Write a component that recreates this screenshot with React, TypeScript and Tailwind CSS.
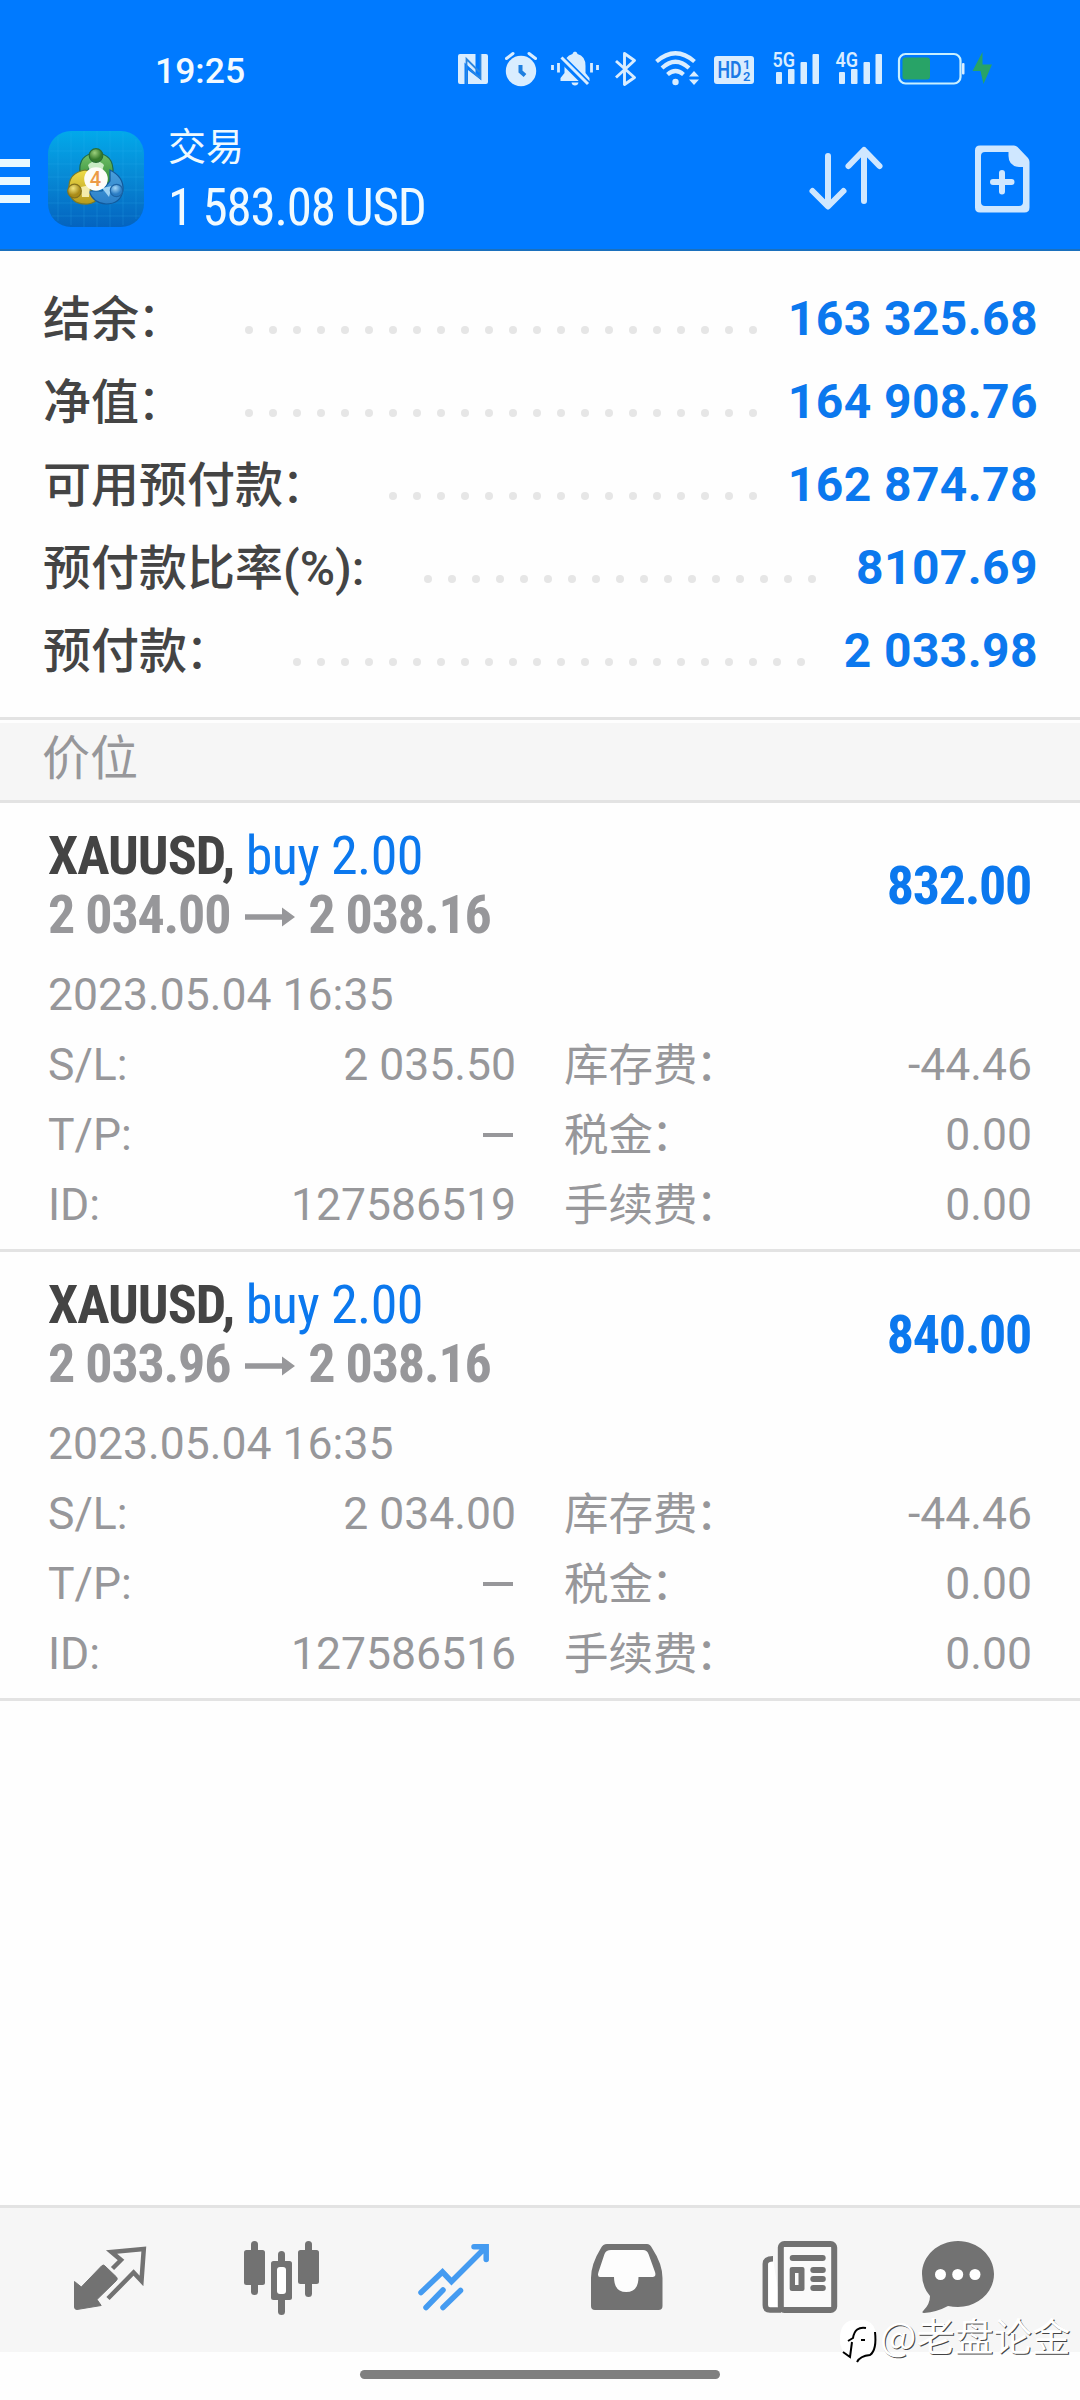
import React from "react";

const ICE = "#d9edff";

function StatusBar() {
  return (
    <div className="flex h-[100px] items-start pt-[50px]">
      <div className="ml-[155px] w-[303px] pt-[2px] font-['Roboto'] text-[35.500px] leading-[38px] font-medium text-[#f3faff]">19:25</div>
      {/* NFC */}
      <svg className="h-[38px] w-[30px]" viewBox="458 50 30 38">
        <path fill={ICE} d="M460 54H475.5V73L464.5 62.5V84H460Q458 84 458 82V56Q458 54 460 54Z" />
        <path fill={ICE} d="M481 54H486Q488 54 488 56V82Q488 84 486 84H468V70L481 80Z" />
        <path fill="none" stroke="#2a86e0" strokeWidth="1.8" d="M466.5 84V59L479.5 72M480.5 54V78.500L470 69" />
      </svg>
      {/* Alarm */}
      <svg className="ml-[16px] h-[38px] w-[34px]" viewBox="504 50 34 38">
        <circle cx="521" cy="71" r="15.200" fill={ICE} />
        <path d="M506.500 58.500L513 53.500M535.500 58.500L529 53.500" stroke={ICE} strokeWidth="3" strokeLinecap="round" />
        <path d="M520.500 65V71.500L525 75.500" stroke="#1f7fe0" strokeWidth="4" fill="none" />
      </svg>
      {/* Muted bell */}
      <svg className="ml-[12px] h-[38px] w-[50px]" viewBox="550 50 50 38">
        <path fill={ICE} d="M575 51.500Q577.500 52 577.500 54Q585.500 56 585.500 66V73L589.500 78V81H560.500V78L564.500 73V66Q564.500 56 572.500 54Q572.500 52 575 51.500ZM571.500 82.500H578.500Q578 85.500 575 85.500Q572 85.500 571.500 82.500Z" />
        <path d="M560 57L588 85" stroke="#007aff" strokeWidth="7.500" />
        <path d="M561.500 57.500L588 84" stroke={ICE} strokeWidth="3" />
        <path d="M552.500 65V70M558.500 63V72.500M591.500 63V72.500M597.500 65V70" stroke={ICE} strokeWidth="2.800" />
      </svg>
      {/* Bluetooth */}
      <svg className="ml-[14px] h-[38px] w-[24px]" viewBox="614 50 24 38">
        <path d="M616 61L634.500 77.500L624.500 84.500V53.500L634.500 60.500L616 77.500" fill="none" stroke={ICE} strokeWidth="2.900" strokeLinejoin="round" />
      </svg>
      {/* Wi-Fi */}
      <svg className="ml-[16px] h-[38px] w-[46px]" viewBox="654 50 46 38">
        <g fill="none" stroke={ICE} strokeWidth="4.200">
          <path d="M656.500 61.500Q675.500 45 694.500 61.500" />
          <path d="M662 68Q675.500 55.500 689 68" />
          <path d="M667.500 74.500Q675.500 67.500 683.500 74.500" />
        </g>
        <circle cx="675.500" cy="82" r="3.200" fill={ICE} />
        <path fill={ICE} d="M689 76.500L694 71L699 76.500ZM689 79.500L694 85L699 79.500Z" />
      </svg>
      {/* HD */}
      <div className="mt-[6px] ml-[14px] h-[28px] w-[40px] rounded-[3px] bg-[#d9edff]">
        <svg className="h-[28px] w-[40px] overflow-visible" viewBox="0 0 40 28" fill="#1b7ae6">
          <text x="3.500" y="22" fontSize="23" fontFamily="Roboto" fontWeight="600" textLength="24" lengthAdjust="spacingAndGlyphs">HD</text>
          <text x="29" y="13" fontSize="13" fontFamily="Roboto" fontWeight="600">1</text>
          <text x="29" y="24.500" fontSize="13" fontFamily="Roboto" fontWeight="600">2</text>
        </svg>
      </div>
      {["5G", "4G"].map((g, i) => (
        <svg key={g} className={i === 0 ? "ml-[18px] h-[38px] w-[48px] overflow-visible" : "ml-[15px] h-[38px] w-[48px] overflow-visible"} viewBox="772 50 48 38" fill={ICE}>
          <text x="772.500" y="67" fontSize="20.500" fontFamily="Roboto" fontWeight="600" textLength="22.500" lengthAdjust="spacingAndGlyphs">{g}</text>
          <rect x="776" y="72" width="6" height="12" rx="1" />
          <rect x="788" y="69" width="6.500" height="15" rx="1" />
          <rect x="800.500" y="62" width="6.500" height="22" rx="1" />
          <rect x="812.500" y="54" width="6.500" height="30" rx="1" />
        </svg>
      ))}
      {/* Battery */}
      <svg className="ml-[14px] h-[38px] w-[98px]" viewBox="897 50 98 38">
        <rect x="899" y="54" width="61.500" height="29.500" rx="6.500" fill="none" stroke="#c8efff" strokeWidth="2.200" />
        <rect x="902.500" y="57.500" width="27.500" height="22" rx="3" fill="#28a367" />
        <rect x="962" y="63" width="2.500" height="11.500" rx="1" fill={ICE} />
        <path fill="#28a367" d="M982.500 52L972.500 71H980.500L983.500 84L992 64.500H982.500Z" />
      </svg>
    </div>
  );
}

function AppLogo() {
  return (
    <svg className="h-[96px] w-[96px]" viewBox="0 0 96 96">
      <defs>
        <linearGradient id="bg" x1="0" y1="0" x2="0" y2="1"><stop offset="0" stopColor="#02a9ea" /><stop offset=".45" stopColor="#078bd6" /><stop offset="1" stopColor="#0463bf" /></linearGradient>
        <linearGradient id="gr" x1="0" y1="0" x2="0" y2="1"><stop offset="0" stopColor="#74c26a" /><stop offset="1" stopColor="#2f8a35" /></linearGradient>
        <linearGradient id="ye" x1="0" y1="0" x2="0" y2="1"><stop offset="0" stopColor="#efdc4a" /><stop offset="1" stopColor="#b59a1c" /></linearGradient>
        <linearGradient id="bl" x1="0" y1="0" x2="0" y2="1"><stop offset="0" stopColor="#4aa0dc" /><stop offset="1" stopColor="#2b7fc8" /></linearGradient>
        <radialGradient id="gh" cx=".4" cy=".3"><stop offset="0" stopColor="#9bd07c" /><stop offset="1" stopColor="#367b2c" /></radialGradient>
        <radialGradient id="yh" cx=".4" cy=".3"><stop offset="0" stopColor="#f2e67e" /><stop offset="1" stopColor="#a98b18" /></radialGradient>
        <radialGradient id="bh" cx=".4" cy=".3"><stop offset="0" stopColor="#a5d8f8" /><stop offset="1" stopColor="#2a7cc4" /></radialGradient>
      </defs>
      <rect width="96" height="96" rx="23" fill="url(#bg)" />
      <path d="M10 6V90M23 2V94M36 0V96M49 0V96M62 0V96M75 2V94M88 8V88M2 20H94M0 33H96M0 46H96M0 59H96M0 72H96M4 85H92" stroke="#37b4ee" strokeOpacity=".2" strokeWidth="1" />
      <g strokeWidth="1.200">
        <path d="M32 42Q30 23 48 22Q66 23 65 42Q64 51 59 53L55 40L41 38L36 44Z" fill="url(#gr)" stroke="#1f6b4a" />
        <path d="M37 39Q20 42 21 58Q22 74 40 73Q47 72 50 67L42 58L41 40Z" fill="url(#ye)" stroke="#7c7a25" />
        <path d="M62 39Q76 46 75 59Q73 73 58 73Q45 72 41 60L54 60L62 50Z" fill="url(#bl)" stroke="#125a9c" />
        <path d="M40 34Q48 26 56 34L54 40H42Z" fill="#c9ebc4" stroke="none" />
        <path d="M33 56L42 54L41 66L34 66Z" fill="#f4ecaa" stroke="none" />
        <path d="M54 57L64 55L61 66Z" fill="#9fd3f3" stroke="none" />
        <circle cx="48" cy="24.500" r="6.800" fill="url(#gh)" stroke="#2a6e36" />
        <circle cx="26.500" cy="60" r="6.800" fill="url(#yh)" stroke="#85731d" />
        <circle cx="68.500" cy="59.500" r="6.200" fill="url(#bh)" stroke="#1c64a6" />
      </g>
      <circle cx="48" cy="48" r="11.800" fill="#fdfcf8" />
      <text x="47.500" y="55" textAnchor="middle" fontFamily="Roboto" fontWeight="500" fontSize="20" fill="#ec9a45">4</text>
    </svg>
  );
}

function Header() {
  return (
    <header className="h-[251px] border-b-2 border-[#1b70bd] bg-[#007aff]">
      <StatusBar />
      <div className="flex items-start">
        <div className="mt-[59px] flex w-[30px] flex-col gap-[10px]">
          <div className="h-2 bg-[#e9f8ff]" />
          <div className="h-2 bg-[#e9f8ff]" />
          <div className="h-2 bg-[#e9f8ff]" />
        </div>
        <div className="mt-[31px] ml-[18px]"><AppLogo /></div>
        <div className="ml-[24px] w-[640px] text-[#f0faff]">
          <div className="mt-[19px] font-['Noto_Sans_CJK_SC',sans-serif] text-[38px] leading-[50px]">交易</div>
          <div className="mt-[9px] font-['Roboto'] text-[51px] leading-[60px] font-[450] tracking-[-1.2px] [font-stretch:75%]">1 583.08 USD</div>
        </div>
        <svg className="mt-[40px] h-[80px] w-[80px]" viewBox="808 140 80 80" fill="none" stroke="#cfe7ff" strokeWidth="6" strokeLinecap="round" strokeLinejoin="round">
          <path d="M828 156V206M812.500 191L828 206.500L843.500 191M864 201V151M848.500 166L864 150L879.500 166" />
        </svg>
        <svg className="mt-[40px] ml-[84px] h-[80px] w-[60px]" viewBox="972 140 60 80">
          <path fill="#cfe7ff" fillRule="evenodd" d="M980 145.500H1014Q1016 145.500 1017.500 147L1028 158Q1029.500 160 1029.500 162V207.500Q1029.500 212.500 1024.500 212.500H980Q975 212.500 975 207.500V150.500Q975 145.500 980 145.500ZM985 152Q981 152 981 156V202Q981 206 985 206H1019Q1023 206 1023 202V167H1019Q1008.500 166 1008.500 156V152Z" />
          <path d="M1002 173V191.500M993 182H1011.500" stroke="#cfe7ff" strokeWidth="6" strokeLinecap="round" />
        </svg>
      </div>
    </header>
  );
}

const summary = [
  { label: "结余", suffix: "：", value: "163 325.68", dots: 22, w: "w-[202px]" },
  { label: "净值", suffix: "：", value: "164 908.76", dots: 22, w: "w-[202px]" },
  { label: "可用预付款", suffix: "：", value: "162 874.78", dots: 16, w: "w-[346px]" },
  { label: "预付款比率", suffix: "(%):", value: "8107.69", dots: 17, w: "w-[381px]" },
  { label: "预付款", suffix: "：", value: "2 033.98", dots: 22, w: "w-[250px]" },
];

function Summary() {
  return (
    <section className="flex h-[469px] flex-col border-b-[3px] border-[#e3e3e3] pt-[26px]">
      {summary.map((r) => (
        <div key={r.label} className="flex h-[83px] items-center pr-[42px] pl-[43px]">
          <div className={`${r.w} mb-[8px] shrink-0 font-['Noto_Sans_CJK_SC',sans-serif] text-[48px] leading-[60px] font-medium whitespace-nowrap text-[#444]`}>
            {r.label}
            <span className={r.suffix === "：" ? "ml-[-2px] font-normal" : "font-['Roboto'] leading-none font-medium"}>{r.suffix}</span>
          </div>
          <div className="mt-[23px] flex gap-4">
            {Array.from({ length: r.dots }, (_, i) => (
              <span key={i} className="h-2 w-2 rounded-full bg-[#e6e6e6]" />
            ))}
          </div>
          <div className="ml-auto font-['Roboto'] text-[48px] leading-[60px] font-bold tracking-[0.4px] whitespace-nowrap text-[#0b78ee]">{r.value}</div>
        </div>
      ))}
    </section>
  );
}

interface Position { open: string; profit: string; sl: string; id: string }
const positions: Position[] = [
  { open: "2 034.00", profit: "832.00", sl: "2 035.50", id: "127586519" },
  { open: "2 033.96", profit: "840.00", sl: "2 034.00", id: "127586516" },
];

function PositionCard({ p }: { p: Position }) {
  const rows = [
    ["S/L:", p.sl, "库存费", "-44.46"],
    ["T/P:", "–", "税金", "0.00"],
    ["ID:", p.id, "手续费", "0.00"],
  ];
  return (
    <article className="h-[449px] border-b-[3px] border-[#e3e3e3] px-[48px] pt-[23px] font-['Roboto'] text-[#97979a]">
      <div className="flex items-center justify-between text-[54px] [font-stretch:75%]">
        <div className="font-bold">
          <div className="h-[59px] leading-[60px] tracking-[-1px] whitespace-nowrap text-[#444]">XAUUSD, <span className="font-[450] tracking-[-0.6px] text-[#0b78ee]">buy 2.00</span></div>
          <div className="flex h-[60px] items-center leading-[60px] tracking-[-1.2px] whitespace-nowrap">
            {p.open}
            <svg className="mt-[3px] mr-[13px] ml-[15px] h-5 w-[50px]" viewBox="0 0 50 20" fill="#97979a"><path d="M0 7.200H37V.5L50 10L37 19.500V12.800H0Z" /></svg>
            2 038.16
          </div>
        </div>
        <div className="mr-[1px] leading-[60px] font-bold tracking-[-1.3px] text-[#0b78ee]">{p.profit}</div>
      </div>
      <div className="mt-[15px] text-[44.500px] leading-[70px]">2023.05.04 16:35</div>
      {rows.map(([a, b, c, d]) => (
        <div key={a} className="flex h-[70px] items-center text-[44.500px] leading-[70px]">
          <div className="flex w-[468px] justify-between"><span>{a}</span>
            {b === "–" ? <span className="mt-[33px] mr-[3px] h-[4px] w-[30px] bg-[#97979a]" /> : <span>{b}</span>}
          </div>
          <span className="mb-[6px] ml-[48px] font-['Noto_Sans_CJK_SC',sans-serif] text-[44.500px] leading-[70px]">{c}<span className="ml-[-2px]">：</span></span>
          <span className="ml-auto">{d}</span>
        </div>
      ))}
    </article>
  );
}

function BottomNav() {
  const g = "#727272";
  return (
    <nav className="relative flex h-[147px] border-t-[3px] border-[#e3e3e3] bg-[#f6f6f6] pt-[30px] pl-[69px]">
      <svg className="h-20 w-20" viewBox="69 2238 80 80">
        <path fill={g} stroke={g} strokeWidth="1" strokeLinejoin="round" d="M74.500 2281.500L81.300 2287L101.500 2266Q103.300 2264 105 2266L116.500 2277Q118 2279 116.500 2280.500L97 2299.500L101.200 2305.500L77 2309.500Q74.500 2309.500 74.500 2307Z" />
        <path fill="none" stroke={g} strokeWidth="4.500" d="M112.500 2268.500L121 2260L111.500 2252L143.800 2249L141.500 2281L133.600 2272.500L108 2298.500" />
      </svg>
      <svg className="ml-[92px] h-20 w-20" viewBox="241 2238 80 80" fill={g}>
        <rect x="251" y="2241" width="7" height="54" rx="3.500" /><rect x="244" y="2250" width="21" height="35" rx="2.500" />
        <rect x="278" y="2251" width="7" height="64" rx="3.500" /><rect x="271" y="2261" width="21" height="39" rx="2.500" />
        <rect x="277" y="2267" width="9" height="27" rx="3" fill="#fff" />
        <rect x="305" y="2241" width="7" height="56" rx="3.500" /><rect x="298" y="2250" width="21" height="34" rx="2.500" />
      </svg>
      <svg className="ml-[92px] h-20 w-20" viewBox="413 2238 80 80" fill="none" stroke="#449bf1" strokeWidth="5.500" strokeLinecap="round">
        <path d="M421 2292.500L442.500 2272L451.500 2281.500L486 2247M474 2246.700H486.200V2259.500M426 2307.500L443 2290M443 2307.500L460.500 2290.500" />
      </svg>
      <svg className="ml-[93px] h-20 w-20" viewBox="586 2238 80 80">
        <path fill={g} d="M607 2244H647Q650 2244 652 2248Q662.500 2264 662.500 2278V2306Q662.500 2310 658.500 2310H595Q591 2310 591 2306V2278Q591 2264 601 2248Q603 2244 607 2244Z" />
        <path fill="#fdfdfd" d="M611 2250H643Q647 2250 648.500 2254L655 2272Q656.500 2277 652.500 2277H638.500Q638.500 2292 626.200 2292Q614 2292 614 2277H600Q597 2277 598.500 2272L604.500 2254Q606 2250 611 2250Z" />
      </svg>
      <svg className="ml-[94px] h-20 w-20" viewBox="760 2238 80 80">
        <path d="M773 2258.700Q765.300 2258.700 765.300 2264V2305Q765.300 2310 770 2310H781" fill="#fff" stroke={g} strokeWidth="5.500" />
        <rect x="780.800" y="2244" width="53.400" height="66" rx="3.500" fill="#fafafa" stroke={g} strokeWidth="6" />
        <g fill={g}>
          <rect x="789.700" y="2255" width="36" height="6" rx="3" />
          <path fillRule="evenodd" d="M792 2267H802.500Q804.500 2267 804.500 2269V2289Q804.500 2291 802.500 2291H792Q789.700 2291 789.700 2289V2269Q789.700 2267 792 2267ZM795 2273V2285H798.500V2273Z" />
          <rect x="810.300" y="2267" width="15.500" height="6" rx="3" /><rect x="810.300" y="2276" width="15.500" height="6" rx="3" /><rect x="810.300" y="2285" width="15.500" height="6" rx="3" />
        </g>
      </svg>
      <svg className="ml-[78px] h-20 w-20" viewBox="918 2238 80 80">
        <path fill={g} d="M958 2241C978 2241 994 2256 994 2274C994 2292 978 2307 958 2307Q953 2307 948 2306Q937 2312 924 2313Q921 2313 923.500 2310.500Q930 2304 930 2296Q922 2287 922 2274C922 2256 938 2241 958 2241Z" />
        <g fill="#fff"><circle cx="940.500" cy="2274.500" r="5.500" /><circle cx="957.700" cy="2274.500" r="5.500" /><circle cx="975" cy="2274.500" r="5.500" /></g>
      </svg>
      <div className="absolute top-[108px] left-[838px] flex items-start">
        <svg className="h-[50px] w-[42px]" viewBox="838 2316 42 50">
          <path fill="#fff" d="M852 2320H864Q876 2322 876 2338Q876 2352 867 2356L857 2362L849 2357Q839 2350 840 2338Q840 2323 852 2320Z" />
          <path fill="none" stroke="#000" strokeWidth="2" d="M866 2328Q855 2326 853 2338L848 2341M852 2342L850 2357L843 2352M861 2340H865M875 2332Q877 2350 870 2355Q860 2356 857 2362" />
        </svg>
        <span className="mt-[-7px] font-['Noto_Sans_CJK_SC',sans-serif] text-[38.500px] leading-[50px] whitespace-nowrap text-white [text-shadow:1px_1px_0_#444]">@老盘论金</span>
      </div>
    </nav>
  );
}

export default function App() {
  return (
    <div className="flex h-[2400px] w-[1080px] flex-col overflow-hidden bg-[#fefefe]">
      <Header />
      <Summary />
      <div className="mt-[3px] flex h-[80px] items-center border-b-[3px] border-[#e3e3e3] bg-[#f6f6f6] pb-[15px] pl-[42px] font-['Noto_Sans_CJK_SC',sans-serif] text-[48px] leading-[60px] text-[#97979a]">价位</div>
      {positions.map((p) => <PositionCard key={p.id} p={p} />)}
      <div className="flex-1" />
      <BottomNav />
      <div className="flex h-[48px] justify-center pt-[18px]"><div className="h-[9px] w-[360px] rounded-full bg-[#7f7f7f]" /></div>
    </div>
  );
}
